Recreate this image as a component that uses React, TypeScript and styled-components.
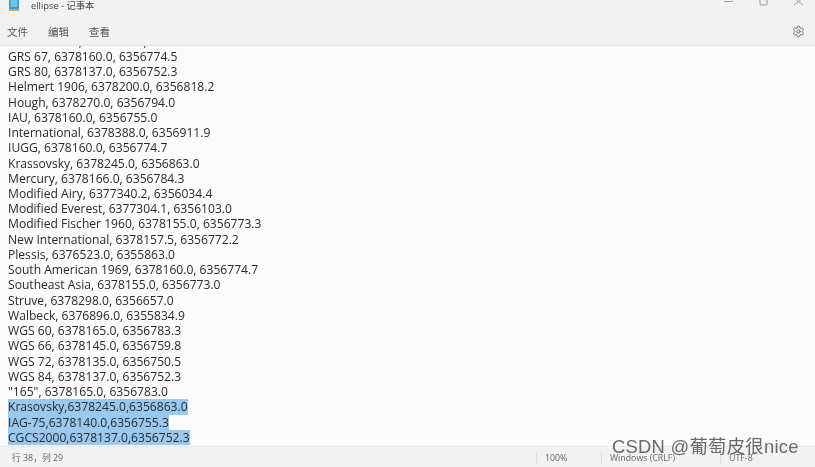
import styled, { createGlobalStyle } from "styled-components";
import { Settings } from "lucide-react";

const Global = createGlobalStyle`
  html, body { margin: 0; padding: 0; background: #fbfbfb; }
  #root { width: 815px; height: 467px; }
`;

const Window = styled.div`
  position: relative;
  width: 815px;
  height: 467px;
  display: flex;
  flex-direction: column;
  overflow: hidden;
  font-family: "Open Sans", "Noto Sans CJK SC", sans-serif;
  color: #222;
  background: #fbfbfb;
  filter: blur(0.35px);
`;

const TitleBar = styled.header`
  height: 18px;
  flex: none;
  display: flex;
  align-items: flex-start;
  background: #f2f2f2;
  overflow: hidden;
`;

const AppIcon = styled.svg`
  width: 10px;
  height: 12px;
  margin: -1px 0 0 9px;
`;

const Title = styled.span`
  margin: -1px 0 0 12px;
  font-size: 9.3px;
  line-height: 14px;
  color: #444;
`;

const Controls = styled.div`
  margin-left: auto;
  display: flex;
  gap: 24px;
  padding: 0 11px 0 0;
  color: #9b9b9b;
`;

const ControlIcon = styled.svg`
  width: 11px;
  height: 11px;
  margin-top: -2px;
  fill: none;
  stroke: currentColor;
  stroke-width: 1;
`;

const MenuBar = styled.nav`
  height: 28px;
  flex: none;
  display: flex;
  align-items: center;
  gap: 20px;
  padding: 0 10px 0 7px;
  box-sizing: border-box;
  background: #f2f2f2;
  border-bottom: 1px solid #e6e6e6;
  color: #555;
`;

const MenuItem = styled.span`
  font-size: 10.5px;
  line-height: 14px;
`;

const Gear = styled(Settings)`
  margin-left: auto;
  color: #555;
`;

const Editor = styled.main`
  flex: 1;
  min-height: 0;
  display: flex;
  flex-direction: column;
  justify-content: flex-end;
  overflow: hidden;
  padding: 0 0 1px 8px;
`;

const Line = styled.div<{ $selected?: boolean }>`
  flex: none;
  height: 15.24px;
  line-height: 15.24px;
  font-size: 12.1px;
  white-space: nowrap;
  color: #2a2a2a;
  span {
    background: ${(p) => (p.$selected ? "#99c9ef" : "transparent")};
    display: inline-block;
    height: 15.6px;
  }
`;

const StatusBar = styled.footer`
  height: 21px;
  flex: none;
  display: flex;
  align-items: center;
  padding-top: 1px;
  box-sizing: border-box;
  background: #f2f2f2;
  border-top: 1px solid #e6e6e6;
  font-size: 8.8px;
  color: #666;
`;

const Position = styled.span`
  width: 536px;
  box-sizing: border-box;
  padding-left: 12px;
`;

const StatusCell = styled.span<{ $width: number }>`
  width: ${(p) => p.$width}px;
  height: 12px;
  line-height: 12px;
  padding-left: 8px;
  border-left: 1px solid #dedede;
  box-sizing: border-box;
`;

const Watermark = styled.div`
  position: absolute;
  left: 612px;
  top: 436px;
  font-family: "Liberation Sans", "Noto Sans CJK SC", sans-serif;
  font-size: 18.4px;
  line-height: 22px;
  letter-spacing: 0.25px;
  white-space: nowrap;
  color: rgba(70, 70, 70, 0.8);
`;

const lines = [
  "Fischer 1968, 6378150.0, 6356768.3",
  "GRS 67, 6378160.0, 6356774.5",
  "GRS 80, 6378137.0, 6356752.3",
  "Helmert 1906, 6378200.0, 6356818.2",
  "Hough, 6378270.0, 6356794.0",
  "IAU, 6378160.0, 6356755.0",
  "International, 6378388.0, 6356911.9",
  "IUGG, 6378160.0, 6356774.7",
  "Krassovsky, 6378245.0, 6356863.0",
  "Mercury, 6378166.0, 6356784.3",
  "Modified Airy, 6377340.2, 6356034.4",
  "Modified Everest, 6377304.1, 6356103.0",
  "Modified Fischer 1960, 6378155.0, 6356773.3",
  "New International, 6378157.5, 6356772.2",
  "Plessis, 6376523.0, 6355863.0",
  "South American 1969, 6378160.0, 6356774.7",
  "Southeast Asia, 6378155.0, 6356773.0",
  "Struve, 6378298.0, 6356657.0",
  "Walbeck, 6376896.0, 6355834.9",
  "WGS 60, 6378165.0, 6356783.3",
  "WGS 66, 6378145.0, 6356759.8",
  "WGS 72, 6378135.0, 6356750.5",
  "WGS 84, 6378137.0, 6356752.3",
  '"165", 6378165.0, 6356783.0',
];

const selected = [
  "Krasovsky,6378245.0,6356863.0",
  "IAG-75,6378140.0,6356755.3",
  "CGCS2000,6378137.0,6356752.3",
];

export default function App() {
  return (
    <Window>
      <Global />
      <TitleBar>
        <AppIcon viewBox="0 0 10 12">
          <rect x="0" y="0" width="10" height="10" fill="#2f9fd0" />
          <rect x="1.5" y="0" width="7" height="8" fill="#6cc4e8" />
          <rect x="0" y="10" width="10" height="2" fill="#d9a06a" />
        </AppIcon>
        <Title>ellipse - 记事本</Title>
        <Controls>
          <ControlIcon viewBox="0 0 11 11"><path d="M1 3.5h9" /></ControlIcon>
          <ControlIcon viewBox="0 0 11 11"><rect x="2" y="0" width="7" height="7" rx="1" /></ControlIcon>
          <ControlIcon viewBox="0 0 11 11"><path d="M1 0l9 7M10 0L1 7" /></ControlIcon>
        </Controls>
      </TitleBar>
      <MenuBar>
        <MenuItem>文件</MenuItem>
        <MenuItem>编辑</MenuItem>
        <MenuItem>查看</MenuItem>
        <Gear size={13} strokeWidth={1.5} />
      </MenuBar>
      <Editor>
        {lines.map((l) => (
          <Line key={l}><span>{l}</span></Line>
        ))}
        {selected.map((l) => (
          <Line key={l} $selected><span>{l}</span></Line>
        ))}
      </Editor>
      <StatusBar>
        <Position>行 38，列 29</Position>
        <StatusCell $width={65}>100%</StatusCell>
        <StatusCell $width={119}>Windows (CRLF)</StatusCell>
        <StatusCell $width={80}>UTF-8</StatusCell>
      </StatusBar>
      <Watermark>CSDN @葡萄皮很nice</Watermark>
    </Window>
  );
}
